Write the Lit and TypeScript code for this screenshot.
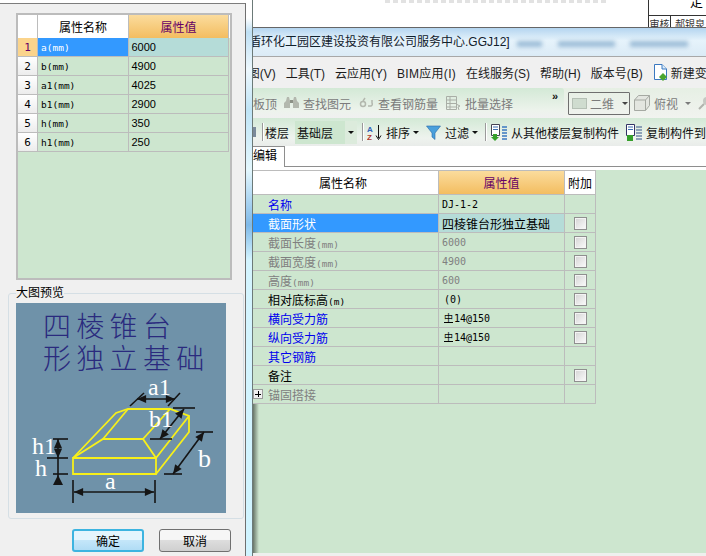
import { LitElement, html, css, svg } from "lit";
import { customElement } from "lit/decorators.js";

const LEFT_ROWS = [
  ["a(mm)", "6000"],
  ["b(mm)", "4900"],
  ["a1(mm)", "4025"],
  ["b1(mm)", "2900"],
  ["h(mm)", "350"],
  ["h1(mm)", "250"],
];

type Row = {
  name: string;
  unit?: string;
  value: string;
  kind: string;
  check: boolean;
  sel?: boolean;
  plus?: boolean;
  rebar?: boolean;
  indent?: boolean;
};

const RIGHT_ROWS: Row[] = [
  { name: "名称", value: "DJ-1-2", kind: "blue", check: false },
  { name: "截面形状", value: "四棱锥台形独立基础", kind: "blue", check: true, sel: true },
  { name: "截面长度", unit: "(mm)", value: "6000", kind: "grey", check: true },
  { name: "截面宽度", unit: "(mm)", value: "4900", kind: "grey", check: true },
  { name: "高度", unit: "(mm)", value: "600", kind: "grey", check: true },
  { name: "相对底标高", unit: "(m)", value: "(0)", kind: "black", check: true, indent: true },
  { name: "横向受力筋", value: "14@150", kind: "blue", check: true, rebar: true },
  { name: "纵向受力筋", value: "14@150", kind: "blue", check: true, rebar: true },
  { name: "其它钢筋", value: "", kind: "blue", check: false },
  { name: "备注", value: "", kind: "black", check: true },
  { name: "锚固搭接", value: "", kind: "grey", check: false, plus: true },
];

const arrow = (x1: number, y1: number, x2: number, y2: number) => {
  const a = Math.atan2(y2 - y1, x2 - x1);
  const head = (x: number, y: number, t: number) =>
    `${x},${y} ${x - 10 * Math.cos(t - 0.42)},${y - 10 * Math.sin(t - 0.42)} ${x - 10 * Math.cos(t + 0.42)},${y - 10 * Math.sin(t + 0.42)}`;
  return svg`<line x1=${x1} y1=${y1} x2=${x2} y2=${y2} stroke="#151515" stroke-width="1.6" />
    <polygon points=${head(x2, y2, a)} fill="#151515" />
    <polygon points=${head(x1, y1, a + Math.PI)} fill="#151515" />`;
};

const tick = (x1: number, y1: number, x2: number, y2: number) =>
  svg`<line x1=${x1} y1=${y1} x2=${x2} y2=${y2} stroke="#151515" stroke-width="1.6" />`;

@customElement("app-root")
export class AppRoot extends LitElement {
  static styles = css`
    :host {
      display: block;
      position: relative;
      width: 706px;
      height: 556px;
      overflow: hidden;
      background: #ffffff;
      font-family: "Liberation Sans", "Noto Sans CJK SC", sans-serif;
      font-size: 12px;
      color: #000;
    }
    /* windows on the desktop */
    .dialog {
      position: absolute;
      left: 0;
      top: 3px;
      width: 246px;
      height: 553px;
      box-sizing: border-box;
      background: #f0f0f0;
      border-top: 1px solid #7d7d7d;
      border-right: 1px solid #6f6f6f;
      display: flex;
      flex-direction: column;
      padding: 9px 0 0 16px;
    }
    .frame-strip {
      position: absolute;
      left: 246px;
      top: 0;
      width: 6px;
      height: 556px;
      background: linear-gradient(
        #ffffff 0,
        #ffffff 18px,
        #bfe0f4 32px,
        #eef8fd 70px,
        #bfe4f6 110px,
        #e4f7fd 170px,
        #7fb9e8 225px,
        #d4f4fe 260px,
        #d0f4ff 100%
      );
      border-right: 1px solid #6c7a78;
    }
    .doc {
      position: absolute;
      left: 253px;
      top: 0;
      width: 453px;
      height: 27px;
      background: #fff;
    }
    .doc-line {
      position: absolute;
      left: 132px;
      top: 0;
      width: 223px;
      height: 3px;
      background: repeating-linear-gradient(90deg, #e2e2e2 0 5px, #fff 5px 8px);
    }
    .doc-table {
      position: absolute;
      left: 395px;
      top: 0;
      width: 58px;
      height: 27px;
      box-sizing: border-box;
      border-left: 1px solid #333;
    }
    .doc-table .end {
      position: absolute;
      right: 3px;
      top: -9px;
      font-size: 13px;
    }
    .doc-cells {
      position: absolute;
      left: 0;
      right: 0;
      top: 15px;
      height: 12px;
      border-top: 1px solid #333;
      display: flex;
      font-size: 10px;
      line-height: 17px;
      color: #333;
      overflow: hidden;
      white-space: nowrap;
    }
    .doc-cells span:first-child {
      width: 21px;
      border-right: 1px solid #333;
      text-align: center;
      flex: none;
    }
    .doc-cells span:last-child {
      padding-left: 4px;
    }
    .app {
      position: absolute;
      left: 253px;
      top: 27px;
      width: 453px;
      height: 529px;
      box-sizing: border-box;
      border-top: 1px solid #666;
      background: #cde6cf;
      display: flex;
      flex-direction: column;
      overflow: hidden;
    }
    /* dialog table */
    .dlg-table {
      width: 216px;
      height: 267px;
      box-sizing: border-box;
      border: 2px solid #bcbcbc;
      background: #cde6cf;
      flex: none;
    }
    .dlg-head,
    .dlg-row {
      display: grid;
      grid-template-columns: 20px 91px 100px;
    }
    .dlg-head {
      height: 23px;
      background: #fff;
    }
    .dlg-head > div,
    .dlg-row > div {
      box-sizing: border-box;
      border-right: 1px solid #bcbcbc;
      border-bottom: 1px solid #bcbcbc;
      display: flex;
      align-items: center;
    }
    .dlg-head > div {
      justify-content: center;
      font-size: 12px;
      border-bottom: 0;
    }
    .dlg-row {
      height: 19px;
    }
    .dlg-row .num {
      justify-content: center;
      background: linear-gradient(#ffffff, #ececec);
      font-size: 11px;
      font-family: "DejaVu Sans Mono", monospace;
    }
    .dlg-row .name {
      font-family: "DejaVu Sans Mono", monospace;
      font-size: 9.5px;
      padding-left: 3px;
    }
    .dlg-row .val {
      padding-left: 2.5px;
      font-size: 11px;
    }
    .dlg-row.on .num {
      background: #fbd48c;
      color: #660066;
    }
    .dlg-row.on .name {
      background: #3399ff;
      color: #fff;
    }
    .dlg-row.on .val {
      background: #b5dcd8;
    }
    .orange {
      background: linear-gradient(#fbdc9d, #f3bd60) !important;
      color: #660066;
    }
    .preview {
      position: relative;
      width: 236px;
      height: 226px;
      margin: 13px 0 0 -8px;
      box-sizing: border-box;
      border: 1px solid #d5dfe5;
      border-radius: 3px;
      padding: 9px 7px 0;
      flex: none;
    }
    .preview-label {
      position: absolute;
      left: 7px;
      top: -9px;
      background: #f0f0f0;
      font-size: 12px;
      line-height: 16px;
    }
    .preview svg {
      display: block;
    }
    .actions {
      display: flex;
      gap: 15px;
      margin: 10px 0 0 56px;
    }
    .btn {
      width: 72px;
      height: 23px;
      box-sizing: border-box;
      border: 1px solid #707070;
      border-radius: 3px;
      background: linear-gradient(#f6f6f6 45%, #dddddd 50%, #cfcfcf);
      display: flex;
      align-items: center;
      justify-content: center;
      font-size: 12px;
    }
    .btn.primary {
      border: 2px solid #3db4e0;
      background: linear-gradient(#e4f5fd 45%, #c4e6f9 50%, #b0dcf5);
    }
    /* main window */
    .title {
      position: relative;
      height: 29px;
      flex: none;
      box-sizing: border-box;
      padding: 5px 0 0 0;
      font-size: 12px;
      line-height: 18px;
      white-space: nowrap;
      color: #10202c;
      background: linear-gradient(#b4d5f0, #e6f3fb 45%, #dbebf6);
      border-bottom: 1px solid #a8a8a8;
      overflow: hidden;
    }
    .title-text {
      margin-left: -4px;
    }
    .blob {
      position: absolute;
      top: 13px;
      height: 6px;
      background: #9dbdd8;
      filter: blur(2px);
    }
    .blob.one {
      left: 264px;
      width: 25px;
    }
    .blob.two {
      left: 305px;
      width: 57px;
    }
    .blob.three {
      left: 377px;
      width: 58px;
    }
    .menu {
      height: 31px;
      flex: none;
      box-sizing: border-box;
      background: #f0f0f0;
      display: flex;
      align-items: center;
      gap: 10px;
      font-size: 12px;
      white-space: nowrap;
      overflow: hidden;
      color: #1c1c1c;
    }
    .menu .cut {
      margin-left: -5.3px;
    }
    .menu .bim {
      letter-spacing: 0.3px;
    }
    .with-icon {
      display: inline-flex;
      align-items: center;
      gap: 3px;
      flex: none;
    }
    .tools1 {
      height: 30px;
      flex: none;
      background: linear-gradient(#e6efe4, #f1f3ef);
      display: flex;
      align-items: center;
      white-space: nowrap;
      overflow: hidden;
      color: #7b7b7b;
    }
    .band {
      width: 311px;
      height: 30px;
      flex: none;
      border-radius: 0 3px 3px 0;
      background: linear-gradient(#d3e9d6, #edf3ec 75%, #f0f0f0);
      display: flex;
      align-items: center;
    }
    .tools1 .item {
      display: inline-flex;
      align-items: center;
      gap: 4px;
      flex: none;
    }
    .find {
      margin-left: 7px;
    }
    .rebar-qty {
      margin-left: 8px;
    }
    .batch {
      margin-left: 8px;
    }
    .more {
      position: relative;
      top: -7px;
      color: #111;
      font-size: 11px;
      font-weight: bold;
      line-height: 10px;
      margin-left: 39px;
      flex: none;
    }
    .combo-2d {
      flex: none;
      width: 62px;
      height: 23px;
      box-sizing: border-box;
      border: 1px solid #6f6f6f;
      border-radius: 1px;
      display: flex;
      align-items: center;
      gap: 3px;
      padding-left: 3px;
      margin-left: 4px;
    }
    .swatch {
      width: 13px;
      height: 9px;
      border: 1px solid #b5c0b5;
      background: #cfdccf;
      flex: none;
    }
    .caret {
      width: 0;
      height: 0;
      border-left: 3px solid transparent;
      border-right: 3px solid transparent;
      border-top: 3px solid currentColor;
      flex: none;
    }
    .combo-2d .caret {
      color: #444;
      margin-left: 5px;
    }
    .view {
      margin-left: 4px;
    }
    .view .caret {
      margin-left: 3px;
    }
    .zoom-tool {
      flex: none;
      margin-left: 7px;
    }
    .tools2 {
      height: 28px;
      flex: none;
      box-sizing: border-box;
      background: linear-gradient(#d3e9d6, #eef3ee 72%, #e9ecea);
      display: flex;
      align-items: center;
      white-space: nowrap;
      overflow: hidden;
      color: #111;
    }
    .tools2 .item {
      display: inline-flex;
      align-items: center;
      flex: none;
      gap: 4px;
    }
    .stub {
      width: 3px;
      height: 10px;
      background: #7a8a9a;
      flex: none;
    }
    .sep {
      width: 1px;
      height: 18px;
      background: #9a9a9a;
      box-shadow: 1px 0 #fff;
      flex: none;
      margin-left: 6px;
    }
    .floor-label {
      margin-left: 2px;
    }
    .floor-combo {
      width: 62px;
      height: 23px;
      margin-left: 6px;
      box-sizing: border-box;
      background: #cde6cf;
      display: flex;
      align-items: center;
      justify-content: space-between;
      padding-left: 2px;
      flex: none;
    }
    .drop {
      width: 12px;
      height: 23px;
      background: #dcebdc;
      display: flex;
      align-items: center;
      justify-content: center;
      color: #111;
    }
    .sep.after-floor {
      margin-left: 5px;
    }
    .sort {
      margin-left: 4px;
    }
    .filter {
      margin-left: 7px;
    }
    .tools2 .caret {
      margin-left: -1px;
    }
    .sep.after-filter {
      margin-left: 7px;
    }
    .copy-from {
      margin-left: 5px;
    }
    .copy-to {
      margin-left: 7px;
    }
    .tabs {
      height: 24px;
      flex: none;
      background: #fff;
      box-sizing: border-box;
    }
    .tab-strip {
      height: 21px;
      box-sizing: border-box;
      border-bottom: 1px solid #8e8e8e;
    }
    .tab {
      width: 32px;
      height: 21px;
      box-sizing: border-box;
      background: #fff;
      border-right: 1px solid #8e8e8e;
      border-top: 1px solid #8e8e8e;
      font-size: 12px;
      line-height: 19px;
      white-space: nowrap;
    }
    .grid {
      width: 343px;
      flex: none;
      border-top: 1px solid #bcbcbc;
    }
    .g-head,
    .g-row {
      display: grid;
      grid-template-columns: 186px 126px 31px;
    }
    .g-head {
      height: 24px;
    }
    .g-head > div {
      box-sizing: border-box;
      display: flex;
      align-items: center;
      justify-content: center;
      background: #fff;
      border-right: 1px solid #bcbcbc;
      border-bottom: 1px solid #bcbcbc;
      font-size: 12px;
    }
    .g-head > .h-name {
      padding-right: 5px;
    }
    .g-row {
      height: 19px;
    }
    .g-row > div {
      box-sizing: border-box;
      border-right: 1px solid #bcbcbc;
      border-bottom: 1px solid #bcbcbc;
      display: flex;
      align-items: center;
      overflow: hidden;
      white-space: nowrap;
    }
    .g-name {
      padding-left: 15px;
      position: relative;
    }
    .g-val {
      padding-left: 3px;
      font-family: "DejaVu Sans Mono", monospace;
      font-size: 10px;
    }
    .g-val.indent {
      padding-left: 5px;
    }
    .mark {
      font-family: "Noto Sans CJK SC", sans-serif;
      font-size: 9px;
      line-height: 9px;
      margin-right: 1px;
      border-bottom: 1px solid #000;
    }
    .g-chk {
      justify-content: center;
    }
    .g-row.blue .g-name {
      color: #0000ee;
    }
    .g-row.grey > div {
      color: #808080;
    }
    .g-row.on .g-name {
      background: #3399ff;
      color: #fff;
    }
    .g-row.on .g-val {
      background: #b5dcd8;
      color: #000;
      font-family: "Liberation Sans", "Noto Sans CJK SC", sans-serif;
      font-size: 12px;
    }
    .unit {
      font-family: "DejaVu Sans Mono", monospace;
      font-size: 9.5px;
    }
    .box {
      width: 13px;
      height: 13px;
      box-sizing: border-box;
      border: 1px solid #8f8f8f;
      background: linear-gradient(135deg, #d4d4d4, #fbfbfb);
      box-shadow: inset 0 0 0 1px #f4f4f4;
    }
    .plus {
      position: absolute;
      left: 0;
      top: 4px;
      width: 10px;
      height: 10px;
      box-sizing: border-box;
      border: 1px solid #9c9c9c;
      background:
        linear-gradient(#000, #000) center / 6px 1px no-repeat,
        linear-gradient(#000, #000) center / 1px 6px no-repeat,
        #f0f0f0;
    }
    .fill {
      flex: 1;
      background: linear-gradient(90deg, rgba(70, 80, 70, 0.75), rgba(70, 80, 70, 0) 6px);
    }
    .foot {
      height: 3px;
      flex: none;
      background: #eef0ee;
    }
  `;

  private preview() {
    return svg`<svg width="210" height="210" viewBox="0 0 210 210">
      <rect width="210" height="210" fill="#6f92a9" />
      <g font-size="28" fill="#2a2a7e" letter-spacing="5.3" font-family="Noto Sans CJK SC" font-weight="300">
        <text x="27" y="34">四棱锥台</text>
        <text x="27" y="66">形独立基础</text>
      </g>
      <g fill="none" stroke="#f7f01a" stroke-width="1.8">
        <polygon points="57,155 140,155 140,171 57,171" />
        <polyline points="57,155 100,110 112,106 154,106 173,113 173,129 140,171" />
        <polyline points="57,155 87,136 127,136 140,155 173,113" />
        <polyline points="87,136 112,106" />
        <polyline points="127,136 154,106" />
      </g>
      ${arrow(121, 96, 159, 96)}
      ${tick(114, 103, 128, 90)}
      ${tick(152, 103, 164, 90)}
      ${arrow(144, 136, 168, 106)}
      ${tick(134, 136, 156, 136)}
      ${tick(157, 105, 179, 105)}
      ${arrow(157, 171, 188, 129)}
      ${tick(148, 171, 166, 171)}
      ${tick(180, 129, 197, 129)}
      ${arrow(42, 136, 42, 155)}
      <line x1="42" y1="155" x2="42" y2="182" stroke="#151515" stroke-width="1.6" />
      <polygon points="42,172 37,182 47,182" fill="#151515" />
      ${tick(37, 136, 52, 136)}
      ${tick(31, 155, 52, 155)}
      ${tick(37, 171, 52, 171)}
      ${arrow(58, 189, 138, 189)}
      ${tick(57, 177, 57, 200)}
      ${tick(139, 177, 139, 200)}
      <g fill="#ffffff" font-family="Liberation Serif" font-size="24">
        <text x="132" y="92">a1</text>
        <text x="133" y="124">b1</text>
        <text x="182" y="164" font-size="26">b</text>
        <text x="89" y="186">a</text>
        <text x="16" y="151">h1</text>
        <text x="19" y="173">h</text>
      </g>
    </svg>`;
  }

  render() {
    return html`
      <div class="doc">
        <div class="doc-line"></div>
        <div class="doc-table">
          <span class="end">定</span>
          <div class="doc-cells"><span>审核</span><span>郝银泉</span></div>
        </div>
      </div>

      <div class="app">
        <div class="title">
          <span class="title-text">盾环化工园区建设投资有限公司服务中心.GGJ12]</span>
          <span class="blob one"></span><span class="blob two"></span><span class="blob three"></span>
        </div>
        <div class="menu">
          <span class="cut">图(V)</span><span>工具(T)</span><span>云应用(Y)</span><span class="bim">BIM应用(I)</span>
          <span>在线服务(S)</span><span>帮助(H)</span><span>版本号(B)</span>
          <span class="with-icon">
            <svg width="15" height="17" viewBox="0 0 15 17">
              <path d="M1.5 .5H9L13.5 5V15.5H1.5Z" fill="#fff" stroke="#3a78c0" />
              <path d="M9 .5V5H13.5" fill="#dcecfa" stroke="#3a78c0" />
              <path d="M10 9l4 4-4 4-4-4z" fill="#4aa52e" />
            </svg>
            新建变
          </span>
        </div>
        <div class="tools1">
          <div class="band">
            <span class="item">板顶</span>
            <span class="item find">
              <svg width="15" height="14" viewBox="0 0 15 14">
                <path d="M2 5l1-4h2l1 4v7H0V7zM13 5l-1-4h-2L9 5v7h6V7z" fill="#b3b8ae" />
                <rect x="6" y="4" width="3" height="3" fill="#8c9186" />
              </svg>
              <span>查找图元</span>
            </span>
            <span class="item rebar-qty">
              <svg width="15" height="12" viewBox="0 0 15 12" fill="none" stroke="#b3b8ae" stroke-width="1.5">
                <circle cx="4" cy="7" r="2.5" /><path d="M4 4L6 1M9 9h3a2 2 0 0 0 1-3V3" />
              </svg>
              <span>查看钢筋量</span>
            </span>
            <span class="item batch">
              <svg width="15" height="15" viewBox="0 0 15 15" fill="none" stroke="#a9aea6">
                <path d="M.5 .5h10v13H.5zM.5 4h10M.5 7.5h10M.5 11h10M4 .5v13" />
                <path d="M10 8l4 2-2 1 1 3" />
              </svg>
              <span>批量选择</span>
            </span>
            <span class="more">»</span>
          </div>
          <span class="combo-2d"><span class="swatch"></span>二维<span class="caret"></span></span>
          <span class="item view">
            <svg width="16" height="16" viewBox="0 0 16 16" fill="#e3e6e0" stroke="#a5a9a2">
              <path d="M.5 5l4-4.5h11v10l-4 5H.5zM.5 5h11v10.5M11.5 5l4-4.5" />
            </svg>
            俯视<span class="caret"></span>
          </span>
          <svg class="zoom-tool" width="14" height="16" viewBox="0 0 14 16">
            <circle cx="9" cy="6" r="4" fill="#c5c8c2" /><path d="M6 9L1 14" stroke="#b0b3ad" stroke-width="2" />
          </svg>
        </div>
        <div class="tools2">
          <span class="stub"></span>
          <span class="sep"></span>
          <span class="floor-label">楼层</span>
          <span class="floor-combo">基础层<span class="drop"><span class="caret"></span></span></span>
          <span class="sep after-floor"></span>
          <span class="item sort">
            <svg width="15" height="17" viewBox="0 0 15 17">
              <text x="0" y="8" font-size="8" font-weight="bold" fill="#2f62b6" font-family="Liberation Sans">A</text>
              <text x="0" y="16" font-size="8" font-weight="bold" fill="#b0382e" font-family="Liberation Sans">Z</text>
              <path d="M11.5 1v13M9 11.5l2.5 4 2.5-4" stroke="#111" fill="none" />
            </svg>
            排序<span class="caret"></span>
          </span>
          <span class="item filter">
            <svg width="15" height="15" viewBox="0 0 15 15">
              <path d="M.5 1h14L9 8v6.5L6 12V8z" fill="#4aa0dc" stroke="#2868a8" stroke-width=".6" />
            </svg>
            过滤<span class="caret"></span>
          </span>
          <span class="sep after-filter"></span>
          <span class="item copy-from">
            <svg width="16" height="17" viewBox="0 0 16 17">
              <path d="M.5 .5h8v11h-8z" fill="#fff" stroke="#445" />
              <path d="M2 3h5M2 5.5h5" stroke="#3a6fb0" />
              <path d="M11 3h5M11 6h5M11 9h5M11 12h5M11 15h5" stroke="#3a78c0" stroke-width="1.5" />
              <path d="M2 10h4v3h2l-4 4-4-4h2z" fill="#35a02a" />
            </svg>
            从其他楼层复制构件
          </span>
          <span class="item copy-to">
            <svg width="16" height="17" viewBox="0 0 16 17">
              <path d="M.5 .5h8v11h-8z" fill="#fff" stroke="#336" />
              <path d="M2 3h5M2 5.5h5" stroke="#3a6fb0" />
              <path d="M10 3h6M10 6h6M10 9h6M10 12h6M10 15h6" stroke="#7088a8" stroke-width="1.5" />
              <path d="M1 11h6v6H1z" fill="#35a02a" />
            </svg>
            复制构件到
          </span>
        </div>
        <div class="tabs">
          <div class="tab-strip"><div class="tab">编辑</div></div>
        </div>
        <div class="grid">
          <div class="g-head">
            <div class="h-name">属性名称</div>
            <div class="orange">属性值</div>
            <div>附加</div>
          </div>
          ${RIGHT_ROWS.map((r) => this.gridRow(r))}
        </div>
        <div class="fill"></div>
        <div class="foot"></div>
      </div>

      <div class="frame-strip"></div>

      <div class="dialog">
        <div class="dlg-table">
          <div class="dlg-head">
            <div></div>
            <div>属性名称</div>
            <div class="orange">属性值</div>
          </div>
          ${LEFT_ROWS.map(
            ([name, val], i) => html`<div class="dlg-row ${i === 0 ? "on" : ""}">
              <div class="num">${i + 1}</div>
              <div class="name">${name}</div>
              <div class="val">${val}</div>
            </div>`
          )}
        </div>
        <div class="preview">
          <span class="preview-label">大图预览</span>
          ${this.preview()}
        </div>
        <div class="actions">
          <div class="btn primary">确定</div>
          <div class="btn">取消</div>
        </div>
      </div>
    `;
  }

  private gridRow(r: Row) {
    return html`<div class="g-row ${r.kind} ${r.sel ? "on" : ""}">
      <div class="g-name">
        ${r.plus ? html`<span class="plus"></span>` : ""}
        <span>${r.name}${r.unit ? html`<span class="unit">${r.unit}</span>` : ""}</span>
      </div>
      <div class="g-val ${r.rebar || r.indent ? "indent" : ""}">
        ${r.rebar ? html`<span class="mark">中</span>` : ""}${r.value}
      </div>
      <div class="g-chk">${r.check ? html`<span class="box"></span>` : ""}</div>
    </div>`;
  }
}

declare global {
  interface HTMLElementTagNameMap {
    "app-root": AppRoot;
  }
}
